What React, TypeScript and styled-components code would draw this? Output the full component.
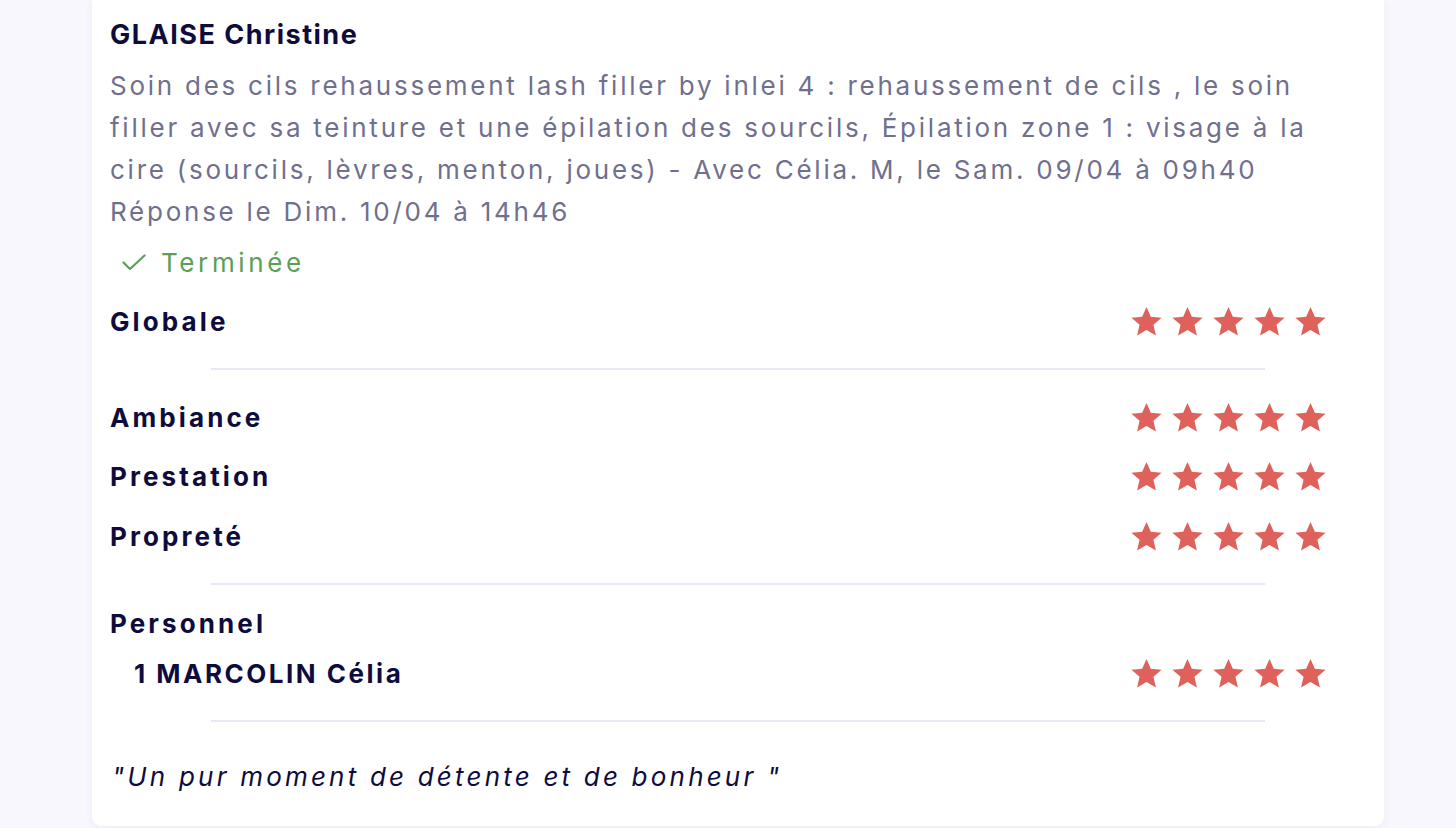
import React from 'react'
import styled, { createGlobalStyle } from 'styled-components'

const colors = {
    page: '#f7f7fd',
    navy: '#0e0c3d',
    grey: '#706f8e',
    green: '#5a9f53',
    star: '#df615b',
    line: '#e8e7f6',
}

const GlobalStyle = createGlobalStyle`
    html, body {
        margin: 0;
        padding: 0;
        background: ${colors.page};
    }
    body {
        font-family: Inter, "Open Sans", sans-serif;
        color: ${colors.navy};
    }
`

type RatingProps = {
    label: string
    value: number
    indent?: boolean
}

const descriptionLines = [
    'Soin des cils rehaussement lash filler by inlei 4 : rehaussement de cils , le soin',
    'filler avec sa teinture et une épilation des sourcils, Épilation zone 1 : visage à la',
    'cire (sourcils, lèvres, menton, joues) - Avec Célia. M, le Sam. 09/04 à 09h40',
    'Réponse le Dim. 10/04 à 14h46',
]

const Star = ({ filled }: { filled: boolean }) => (
    <StarSvg viewBox="0 0 24 24" $filled={filled}>
        <path d="M12 1.4l3.15 7.2 7.85.7-5.95 5.15 1.8 7.75L12 18.1l-6.85 4.1 1.8-7.75L1 9.3l7.85-.7z" />
    </StarSvg>
)

const Stars = ({ value }: { value: number }) => (
    <StarList>
        {[1, 2, 3, 4, 5].map((n) => (
            <Star key={n} filled={n <= value} />
        ))}
    </StarList>
)

const Rating = (props: RatingProps) => (
    <RatingRow>
        <Label $indent={props.indent}>{props.label}</Label>
        <Stars value={props.value} />
    </RatingRow>
)

export default function App() {
    return (
        <>
            <GlobalStyle />
            <Page>
                <Card>
                    <Name>GLAISE Christine</Name>
                    <Description>
                        {descriptionLines.map((line) => (
                            <Line key={line}>{line}</Line>
                        ))}
                    </Description>
                    <Status>
                        <svg width="24" height="17" viewBox="0 0 24 17" fill="none">
                            <path d="M1.5 8.5l6.5 6.5L22.5 1.5" stroke={colors.green} strokeWidth="2.2" strokeLinecap="round" strokeLinejoin="round" />
                        </svg>
                        Terminée
                    </Status>

                    <Section $top={19}>
                        <Rating label="Globale" value={5} />
                    </Section>
                    <Divider />
                    <Section $top={27}>
                        <Rating label="Ambiance" value={5} />
                        <Rating label="Prestation" value={5} />
                        <Rating label="Propreté" value={5} />
                    </Section>
                    <Divider />
                    <Section $top={18} $gap={10}>
                        <Label>Personnel</Label>
                        <Rating label="1 MARCOLIN Célia" value={5} indent />
                    </Section>
                    <Divider />
                    <Quote>"Un pur moment de détente et de bonheur "</Quote>
                </Card>
            </Page>
        </>
    )
}

const Page = styled.div`
    width: 1456px;
    height: 828px;
    overflow: hidden;
    padding: 0 72px 0 92px;
    box-sizing: border-box;
`

const Card = styled.div`
    background: #ffffff;
    border-radius: 0 0 9px 9px;
    box-shadow: 0 2px 10px rgba(40, 40, 120, 0.05);
    padding: 15px 18px 29px 18px;
    display: flex;
    flex-direction: column;
`

const Name = styled.h2`
    margin: 0;
    font-size: 27px;
    line-height: 40px;
    font-weight: 700;
    letter-spacing: 1.5px;
    color: ${colors.navy};
`

const Description = styled.p`
    margin: 10px 0 0 0;
    font-size: 26px;
    line-height: 42px;
    font-weight: 400;
    letter-spacing: 2.75px;
    color: ${colors.grey};
`

const Line = styled.span`
    display: block;
    white-space: nowrap;
`

const Status = styled.div`
    margin: 9px 0 0 12px;
    display: flex;
    align-items: center;
    gap: 15px;
    height: 40px;
    font-size: 26px;
    letter-spacing: 3.6px;
    color: ${colors.green};
`

const Section = styled.div<{ $top: number; $gap?: number }>`
    display: flex;
    flex-direction: column;
    gap: ${(p) => p.$gap ?? 19.5}px;
    margin-top: ${(p) => p.$top}px;
`

const RatingRow = styled.div`
    display: flex;
    align-items: center;
    justify-content: space-between;
    height: 40px;
    padding-right: 39px;
`

const Label = styled.div<{ $indent?: boolean }>`
    height: 40px;
    display: flex;
    align-items: center;
    padding-left: ${(p) => (p.$indent ? '24px' : '0')};
    font-size: 26px;
    font-weight: 700;
    letter-spacing: ${(p) => (p.$indent ? '2.5px' : '3.1px')};
    color: ${colors.navy};
`

const StarList = styled.div`
    display: flex;
    gap: 8px;
`

const StarSvg = styled.svg<{ $filled: boolean }>`
    width: 33px;
    height: 33px;
    fill: ${(p) => (p.$filled ? colors.star : colors.line)};
`

const Divider = styled.hr`
    border: none;
    height: 2px;
    background: ${colors.line};
    margin: 27px 101px 0 101px;
`

const Quote = styled.p`
    margin: 35px 0 0 2px;
    height: 40px;
    line-height: 40px;
    font-size: 26px;
    font-style: italic;
    letter-spacing: 3.2px;
    color: ${colors.navy};
`
